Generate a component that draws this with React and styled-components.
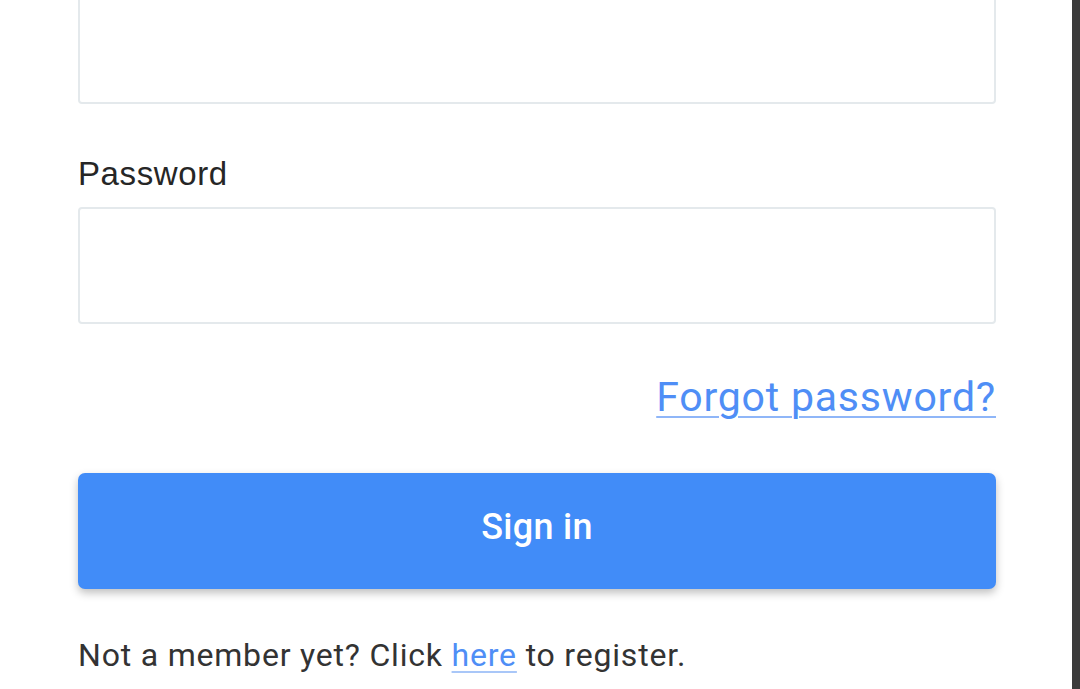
import React from "react";
import styled, { createGlobalStyle } from "styled-components";

const GlobalStyle = createGlobalStyle`
  html, body {
    margin: 0;
    padding: 0;
    background: #ffffff;
    overflow: hidden;
  }
  * {
    box-sizing: border-box;
  }
`;

const Page = styled.div`
  display: flex;
  height: 689px;
  overflow: hidden;
`;

const Panel = styled.main`
  flex: 1;
  padding: 0 76px 0 78px;
  overflow: hidden;
`;

const EdgeBar = styled.div`
  width: 8px;
  background: #3b3b3b;
`;

const Form = styled.form`
  display: flex;
  flex-direction: column;
  margin-top: -13px;
`;

const Label = styled.label`
  font-family: "Liberation Sans", Arial, sans-serif;
  font-size: 33px;
  line-height: 40px;
  letter-spacing: 0.6px;
  color: #262626;
  margin: 50px 0 13px;
`;

const Input = styled.input`
  width: 100%;
  height: 117px;
  border: 2px solid #e4e9ec;
  border-radius: 4px;
  background: #ffffff;
  outline: none;
  padding: 0 20px;
  font-size: 32px;
`;

const LinkRow = styled.div`
  display: flex;
  justify-content: flex-end;
  margin: 51px 0 54px;
`;

const TextLink = styled.a`
  font-family: Roboto, "Liberation Sans", sans-serif;
  font-size: 41px;
  line-height: 44px;
  letter-spacing: 0.8px;
  color: #4f8ef6;
  text-decoration: underline;
  text-decoration-color: #8fb6f8;
  text-decoration-thickness: 2px;
  text-underline-offset: 5px;
  cursor: pointer;
`;

const Button = styled.button`
  height: 116px;
  width: 100%;
  border: none;
  border-radius: 7px;
  background: #418cf8;
  color: #ffffff;
  font-family: Roboto, "Liberation Sans", sans-serif;
  font-weight: 500;
  font-size: 36px;
  letter-spacing: 0.3px;
  padding: 0 0 8px;
  box-shadow: 0 4px 8px rgba(0, 0, 0, 0.25);
  cursor: pointer;
`;

const Note = styled.p`
  margin: 46px 0 0;
  font-family: Roboto, "Liberation Sans", sans-serif;
  font-size: 32px;
  line-height: 40px;
  letter-spacing: 0.8px;
  color: #333333;
`;

const InlineLink = styled(TextLink)`
  font-size: inherit;
  line-height: inherit;
  letter-spacing: inherit;
  text-decoration-color: #a9c7f8;
  text-underline-offset: 5px;
`;

export default function App() {
  return (
    <>
      <GlobalStyle />
      <Page>
        <Panel>
          <Form onSubmit={(e) => e.preventDefault()}>
            <Input type="text" aria-label="Email" />
            <Label htmlFor="password">Password</Label>
            <Input id="password" type="password" />
            <LinkRow>
              <TextLink href="#forgot">Forgot password?</TextLink>
            </LinkRow>
            <Button type="submit">Sign in</Button>
            <Note>
              Not a member yet? Click <InlineLink href="#register">here</InlineLink> to register.
            </Note>
          </Form>
        </Panel>
        <EdgeBar />
      </Page>
    </>
  );
}
